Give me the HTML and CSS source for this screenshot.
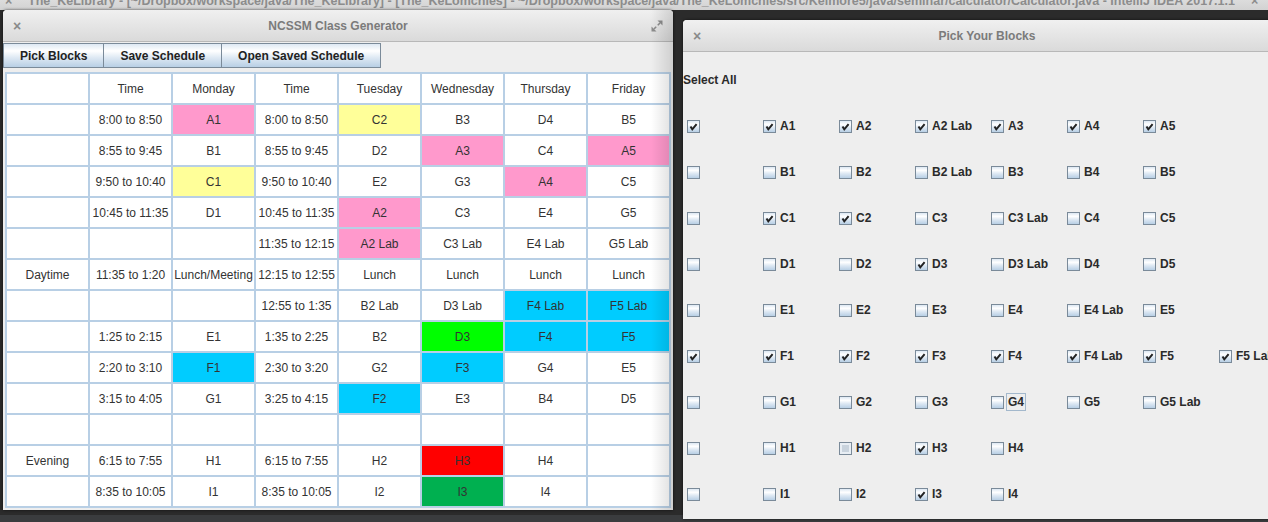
FILE: index.html
```html
<!DOCTYPE html>
<html>
<head>
<meta charset="utf-8">
<title>NCSSM Class Generator</title>
<link rel="stylesheet" href="styles.css">
</head>
<body>
<div class="ide-title">
  <span class="ide-x">×</span>
  <span class="ide-text">The_KeLibrary - [~/Dropbox/workspace/java/The_KeLibrary] - [The_KeLomchies] - ~/Dropbox/workspace/java/The_KeLomchies/src/Kelmore5/java/seminar/calculator/Calculator.java - IntelliJ IDEA 2017.1.1</span>
  <span class="ide-x ide-x-right">×</span>
</div>
<div class="desktop">
  <div class="ide-bottom"></div>

  <section class="window win-main">
    <header class="titlebar">
      <span class="close">×</span>
      <span class="title">NCSSM Class Generator</span>
      <span class="max">
        <svg width="12" height="12" viewBox="0 0 12 12">
          <polygon points="6.5,0.5 11.5,0.5 11.5,5.5" fill="#8c8c8c"/>
          <line x1="9" y1="3" x2="6.8" y2="5.2" stroke="#8c8c8c" stroke-width="1.6"/>
          <polygon points="0.5,6.5 0.5,11.5 5.5,11.5" fill="#8c8c8c"/>
          <line x1="3" y1="9" x2="5.2" y2="6.8" stroke="#8c8c8c" stroke-width="1.6"/>
        </svg>
      </span>
    </header>
    <div class="toolbar">
      <button class="btn">Pick Blocks</button>
      <button class="btn">Save Schedule</button>
      <button class="btn">Open Saved Schedule</button>
    </div>
    <table class="schedule">
      <tr><th></th><th>Time</th><th>Monday</th><th>Time</th><th>Tuesday</th><th>Wednesday</th><th>Thursday</th><th>Friday</th></tr>
      <tr><td></td><td>8:00 to 8:50</td><td class="pink">A1</td><td>8:00 to 8:50</td><td class="yellow">C2</td><td>B3</td><td>D4</td><td>B5</td></tr>
      <tr><td></td><td>8:55 to 9:45</td><td>B1</td><td>8:55 to 9:45</td><td>D2</td><td class="pink">A3</td><td>C4</td><td class="pink">A5</td></tr>
      <tr><td></td><td>9:50 to 10:40</td><td class="yellow">C1</td><td>9:50 to 10:40</td><td>E2</td><td>G3</td><td class="pink">A4</td><td>C5</td></tr>
      <tr><td></td><td>10:45 to 11:35</td><td>D1</td><td>10:45 to 11:35</td><td class="pink">A2</td><td>C3</td><td>E4</td><td>G5</td></tr>
      <tr><td></td><td></td><td></td><td>11:35 to 12:15</td><td class="pink">A2 Lab</td><td>C3 Lab</td><td>E4 Lab</td><td>G5 Lab</td></tr>
      <tr><td>Daytime</td><td>11:35 to 1:20</td><td>Lunch/Meeting</td><td>12:15 to 12:55</td><td>Lunch</td><td>Lunch</td><td>Lunch</td><td>Lunch</td></tr>
      <tr><td></td><td></td><td></td><td>12:55 to 1:35</td><td>B2 Lab</td><td>D3 Lab</td><td class="cyan">F4 Lab</td><td class="cyan">F5 Lab</td></tr>
      <tr><td></td><td>1:25 to 2:15</td><td>E1</td><td>1:35 to 2:25</td><td>B2</td><td class="green">D3</td><td class="cyan">F4</td><td class="cyan">F5</td></tr>
      <tr><td></td><td>2:20 to 3:10</td><td class="cyan">F1</td><td>2:30 to 3:20</td><td>G2</td><td class="cyan">F3</td><td>G4</td><td>E5</td></tr>
      <tr><td></td><td>3:15 to 4:05</td><td>G1</td><td>3:25 to 4:15</td><td class="cyan">F2</td><td>E3</td><td>B4</td><td>D5</td></tr>
      <tr><td></td><td></td><td></td><td></td><td></td><td></td><td></td><td></td></tr>
      <tr><td>Evening</td><td>6:15 to 7:55</td><td>H1</td><td>6:15 to 7:55</td><td>H2</td><td class="red">H3</td><td>H4</td><td></td></tr>
      <tr><td></td><td>8:35 to 10:05</td><td>I1</td><td>8:35 to 10:05</td><td>I2</td><td class="dgreen">I3</td><td>I4</td><td></td></tr>
    </table>
    <div class="edge-shade"></div>
  </section>

  <section class="window win-blocks">
    <header class="titlebar">
      <span class="close">×</span>
      <span class="title">Pick Your Blocks</span>
      <span class="max"></span>
    </header>
    <div class="blocks">
      <div class="cb-row"><span class="select-all">Select All</span></div>

      <div class="cb-row">
        <span class="cb"><span class="box on"><svg viewBox="0 0 11 11"><polyline points="2.5,5.5 4.3,8.3 8.6,3.2"/></svg></span></span>
        <span class="cb"><span class="box on"><svg viewBox="0 0 11 11"><polyline points="2.5,5.5 4.3,8.3 8.6,3.2"/></svg></span><span class="lbl">A1</span></span>
        <span class="cb"><span class="box on"><svg viewBox="0 0 11 11"><polyline points="2.5,5.5 4.3,8.3 8.6,3.2"/></svg></span><span class="lbl">A2</span></span>
        <span class="cb"><span class="box on"><svg viewBox="0 0 11 11"><polyline points="2.5,5.5 4.3,8.3 8.6,3.2"/></svg></span><span class="lbl">A2 Lab</span></span>
        <span class="cb"><span class="box on"><svg viewBox="0 0 11 11"><polyline points="2.5,5.5 4.3,8.3 8.6,3.2"/></svg></span><span class="lbl">A3</span></span>
        <span class="cb"><span class="box on"><svg viewBox="0 0 11 11"><polyline points="2.5,5.5 4.3,8.3 8.6,3.2"/></svg></span><span class="lbl">A4</span></span>
        <span class="cb"><span class="box on"><svg viewBox="0 0 11 11"><polyline points="2.5,5.5 4.3,8.3 8.6,3.2"/></svg></span><span class="lbl">A5</span></span>
      </div>

      <div class="cb-row">
        <span class="cb"><span class="box"></span></span>
        <span class="cb"><span class="box"></span><span class="lbl">B1</span></span>
        <span class="cb"><span class="box"></span><span class="lbl">B2</span></span>
        <span class="cb"><span class="box"></span><span class="lbl">B2 Lab</span></span>
        <span class="cb"><span class="box"></span><span class="lbl">B3</span></span>
        <span class="cb"><span class="box"></span><span class="lbl">B4</span></span>
        <span class="cb"><span class="box"></span><span class="lbl">B5</span></span>
      </div>

      <div class="cb-row">
        <span class="cb"><span class="box"></span></span>
        <span class="cb"><span class="box on"><svg viewBox="0 0 11 11"><polyline points="2.5,5.5 4.3,8.3 8.6,3.2"/></svg></span><span class="lbl">C1</span></span>
        <span class="cb"><span class="box on"><svg viewBox="0 0 11 11"><polyline points="2.5,5.5 4.3,8.3 8.6,3.2"/></svg></span><span class="lbl">C2</span></span>
        <span class="cb"><span class="box"></span><span class="lbl">C3</span></span>
        <span class="cb"><span class="box"></span><span class="lbl">C3 Lab</span></span>
        <span class="cb"><span class="box"></span><span class="lbl">C4</span></span>
        <span class="cb"><span class="box"></span><span class="lbl">C5</span></span>
      </div>

      <div class="cb-row">
        <span class="cb"><span class="box"></span></span>
        <span class="cb"><span class="box"></span><span class="lbl">D1</span></span>
        <span class="cb"><span class="box"></span><span class="lbl">D2</span></span>
        <span class="cb"><span class="box on"><svg viewBox="0 0 11 11"><polyline points="2.5,5.5 4.3,8.3 8.6,3.2"/></svg></span><span class="lbl">D3</span></span>
        <span class="cb"><span class="box"></span><span class="lbl">D3 Lab</span></span>
        <span class="cb"><span class="box"></span><span class="lbl">D4</span></span>
        <span class="cb"><span class="box"></span><span class="lbl">D5</span></span>
      </div>

      <div class="cb-row">
        <span class="cb"><span class="box"></span></span>
        <span class="cb"><span class="box"></span><span class="lbl">E1</span></span>
        <span class="cb"><span class="box"></span><span class="lbl">E2</span></span>
        <span class="cb"><span class="box"></span><span class="lbl">E3</span></span>
        <span class="cb"><span class="box"></span><span class="lbl">E4</span></span>
        <span class="cb"><span class="box"></span><span class="lbl">E4 Lab</span></span>
        <span class="cb"><span class="box"></span><span class="lbl">E5</span></span>
      </div>

      <div class="cb-row">
        <span class="cb"><span class="box on"><svg viewBox="0 0 11 11"><polyline points="2.5,5.5 4.3,8.3 8.6,3.2"/></svg></span></span>
        <span class="cb"><span class="box on"><svg viewBox="0 0 11 11"><polyline points="2.5,5.5 4.3,8.3 8.6,3.2"/></svg></span><span class="lbl">F1</span></span>
        <span class="cb"><span class="box on"><svg viewBox="0 0 11 11"><polyline points="2.5,5.5 4.3,8.3 8.6,3.2"/></svg></span><span class="lbl">F2</span></span>
        <span class="cb"><span class="box on"><svg viewBox="0 0 11 11"><polyline points="2.5,5.5 4.3,8.3 8.6,3.2"/></svg></span><span class="lbl">F3</span></span>
        <span class="cb"><span class="box on"><svg viewBox="0 0 11 11"><polyline points="2.5,5.5 4.3,8.3 8.6,3.2"/></svg></span><span class="lbl">F4</span></span>
        <span class="cb"><span class="box on"><svg viewBox="0 0 11 11"><polyline points="2.5,5.5 4.3,8.3 8.6,3.2"/></svg></span><span class="lbl">F4 Lab</span></span>
        <span class="cb"><span class="box on"><svg viewBox="0 0 11 11"><polyline points="2.5,5.5 4.3,8.3 8.6,3.2"/></svg></span><span class="lbl">F5</span></span>
        <span class="cb"><span class="box on"><svg viewBox="0 0 11 11"><polyline points="2.5,5.5 4.3,8.3 8.6,3.2"/></svg></span><span class="lbl">F5 Lab</span></span>
      </div>

      <div class="cb-row">
        <span class="cb"><span class="box"></span></span>
        <span class="cb"><span class="box"></span><span class="lbl">G1</span></span>
        <span class="cb"><span class="box"></span><span class="lbl">G2</span></span>
        <span class="cb"><span class="box"></span><span class="lbl">G3</span></span>
        <span class="cb"><span class="box"></span><span class="lbl focus">G4</span></span>
        <span class="cb"><span class="box"></span><span class="lbl">G5</span></span>
        <span class="cb"><span class="box"></span><span class="lbl">G5 Lab</span></span>
      </div>

      <div class="cb-row">
        <span class="cb"><span class="box"></span></span>
        <span class="cb"><span class="box"></span><span class="lbl">H1</span></span>
        <span class="cb"><span class="box pressed"></span><span class="lbl">H2</span></span>
        <span class="cb"><span class="box on"><svg viewBox="0 0 11 11"><polyline points="2.5,5.5 4.3,8.3 8.6,3.2"/></svg></span><span class="lbl">H3</span></span>
        <span class="cb"><span class="box"></span><span class="lbl">H4</span></span>
      </div>

      <div class="cb-row">
        <span class="cb"><span class="box"></span></span>
        <span class="cb"><span class="box"></span><span class="lbl">I1</span></span>
        <span class="cb"><span class="box"></span><span class="lbl">I2</span></span>
        <span class="cb"><span class="box on"><svg viewBox="0 0 11 11"><polyline points="2.5,5.5 4.3,8.3 8.6,3.2"/></svg></span><span class="lbl">I3</span></span>
        <span class="cb"><span class="box"></span><span class="lbl">I4</span></span>
      </div>
    </div>
  </section>
</div>
</body>
</html>
```

FILE: styles.css
```css
* { box-sizing: border-box; }

html, body {
  margin: 0;
  padding: 0;
}

body {
  width: 1268px;
  height: 522px;
  overflow: hidden;
  background: #2b2b2b;
  font-family: "Liberation Sans", Arial, sans-serif;
}

/* IDE title strip at the very top (mostly cut off) */
.ide-title {
  height: 10px;
  overflow: hidden;
  display: flex;
  background: linear-gradient(#dcdcdc, #d2d2d2);
  color: #8c8c8c;
  font-weight: bold;
  font-size: 12.5px;
  white-space: nowrap;
}

.ide-title span {
  display: block;
  line-height: 14px;
  margin-top: -6px;
}

.ide-x {
  width: 28px;
  padding-left: 5px;
  flex: none;
}

.ide-text {
  flex: 1;
  overflow: hidden;
}

.ide-x-right {
  width: 22px;
}

.desktop {
  position: relative;
  height: 512px;
}

.ide-bottom {
  position: absolute;
  left: 0;
  right: 0;
  bottom: 0;
  height: 7px;
  background: #3a3c3e;
}

/* Windows */
.window {
  position: absolute;
  background: #eeeeee;
  border-radius: 4px 4px 0 0;
  overflow: hidden;
  box-shadow: 0 0 3px rgba(0, 0, 0, 0.7);
}

.win-main {
  left: 3px;
  top: 0;
  width: 670px;
  height: 500px;
}

.win-blocks {
  left: 683px;
  top: 10px;
  width: 608px;
  height: 499px;
}

.titlebar {
  height: 32px;
  display: grid;
  grid-template-columns: 1fr auto 1fr;
  align-items: center;
  padding: 0 10px;
  background: linear-gradient(#f0f0f0, #dadada);
  border-bottom: 1px solid #b8b8b8;
  color: #7b7b7b;
  font-weight: bold;
  font-size: 12px;
}

.close {
  font-size: 14px;
  color: #8a8a8a;
  justify-self: start;
}

.max {
  justify-self: end;
  display: flex;
}

/* Toolbar */
.toolbar {
  display: flex;
  height: 27px;
  padding-top: 1px;
}

.btn {
  height: 25px;
  padding: 0 16px;
  margin: 0 0 0 -1px;
  border: 1px solid #7a8a99;
  background: linear-gradient(#dde8f3 0%, #ffffff 30%, #dde8f3 60%, #b8cfe5 100%);
  font-family: "Liberation Sans", Arial, sans-serif;
  font-weight: bold;
  font-size: 12px;
  color: #222;
  white-space: nowrap;
}

.btn:first-child {
  margin-left: 0;
}

/* Schedule table */
.schedule {
  margin: 3px 0 0 2px;
  width: 666px;
  table-layout: fixed;
  border-collapse: separate;
  border-spacing: 2px;
  background: #b8cfe5;
  font-size: 12px;
  color: #333;
}

.schedule th,
.schedule td {
  width: 81px;
  height: 29px;
  padding: 0;
  text-align: center;
  vertical-align: middle;
  background: #ffffff;
  font-weight: normal;
  white-space: nowrap;
  overflow: hidden;
}

.schedule .pink { background: #ff99cc; }
.schedule .yellow { background: #ffff99; }
.schedule .cyan { background: #00ccff; }
.schedule .green { background: #00ff00; }
.schedule .red { background: #ff0000; }
.schedule .dgreen { background: #00b050; }

.edge-shade {
  position: absolute;
  top: 0;
  right: 0;
  bottom: 0;
  width: 22px;
  background: linear-gradient(to right, rgba(0, 0, 0, 0), rgba(0, 0, 0, 0.13));
  pointer-events: none;
}

/* Block picker */
.blocks {
  padding-top: 5px;
}

.cb-row {
  display: flex;
  height: 46px;
  align-items: center;
}

.select-all {
  font-weight: bold;
  font-size: 12px;
  color: #2a2a2a;
}

.cb {
  flex: none;
  width: 76px;
  display: flex;
  align-items: center;
  gap: 4px;
  padding-left: 4px;
  font-weight: bold;
  font-size: 12px;
  color: #2a2a2a;
  white-space: nowrap;
}

.box {
  flex: none;
  width: 13px;
  height: 13px;
  border: 1px solid #7a8a99;
  background: linear-gradient(#dde8f3 0%, #ffffff 30%, #dde8f3 60%, #b8cfe5 100%);
  display: flex;
}

.box svg {
  width: 11px;
  height: 11px;
}

.box polyline {
  fill: none;
  stroke: #222;
  stroke-width: 2;
}

.box.pressed {
  background: #c9d3dd;
  box-shadow: inset 0 0 0 2px #e8eef4;
}

.lbl.focus {
  outline: 1px solid #a3b8cc;
  outline-offset: 1px;
}
```
